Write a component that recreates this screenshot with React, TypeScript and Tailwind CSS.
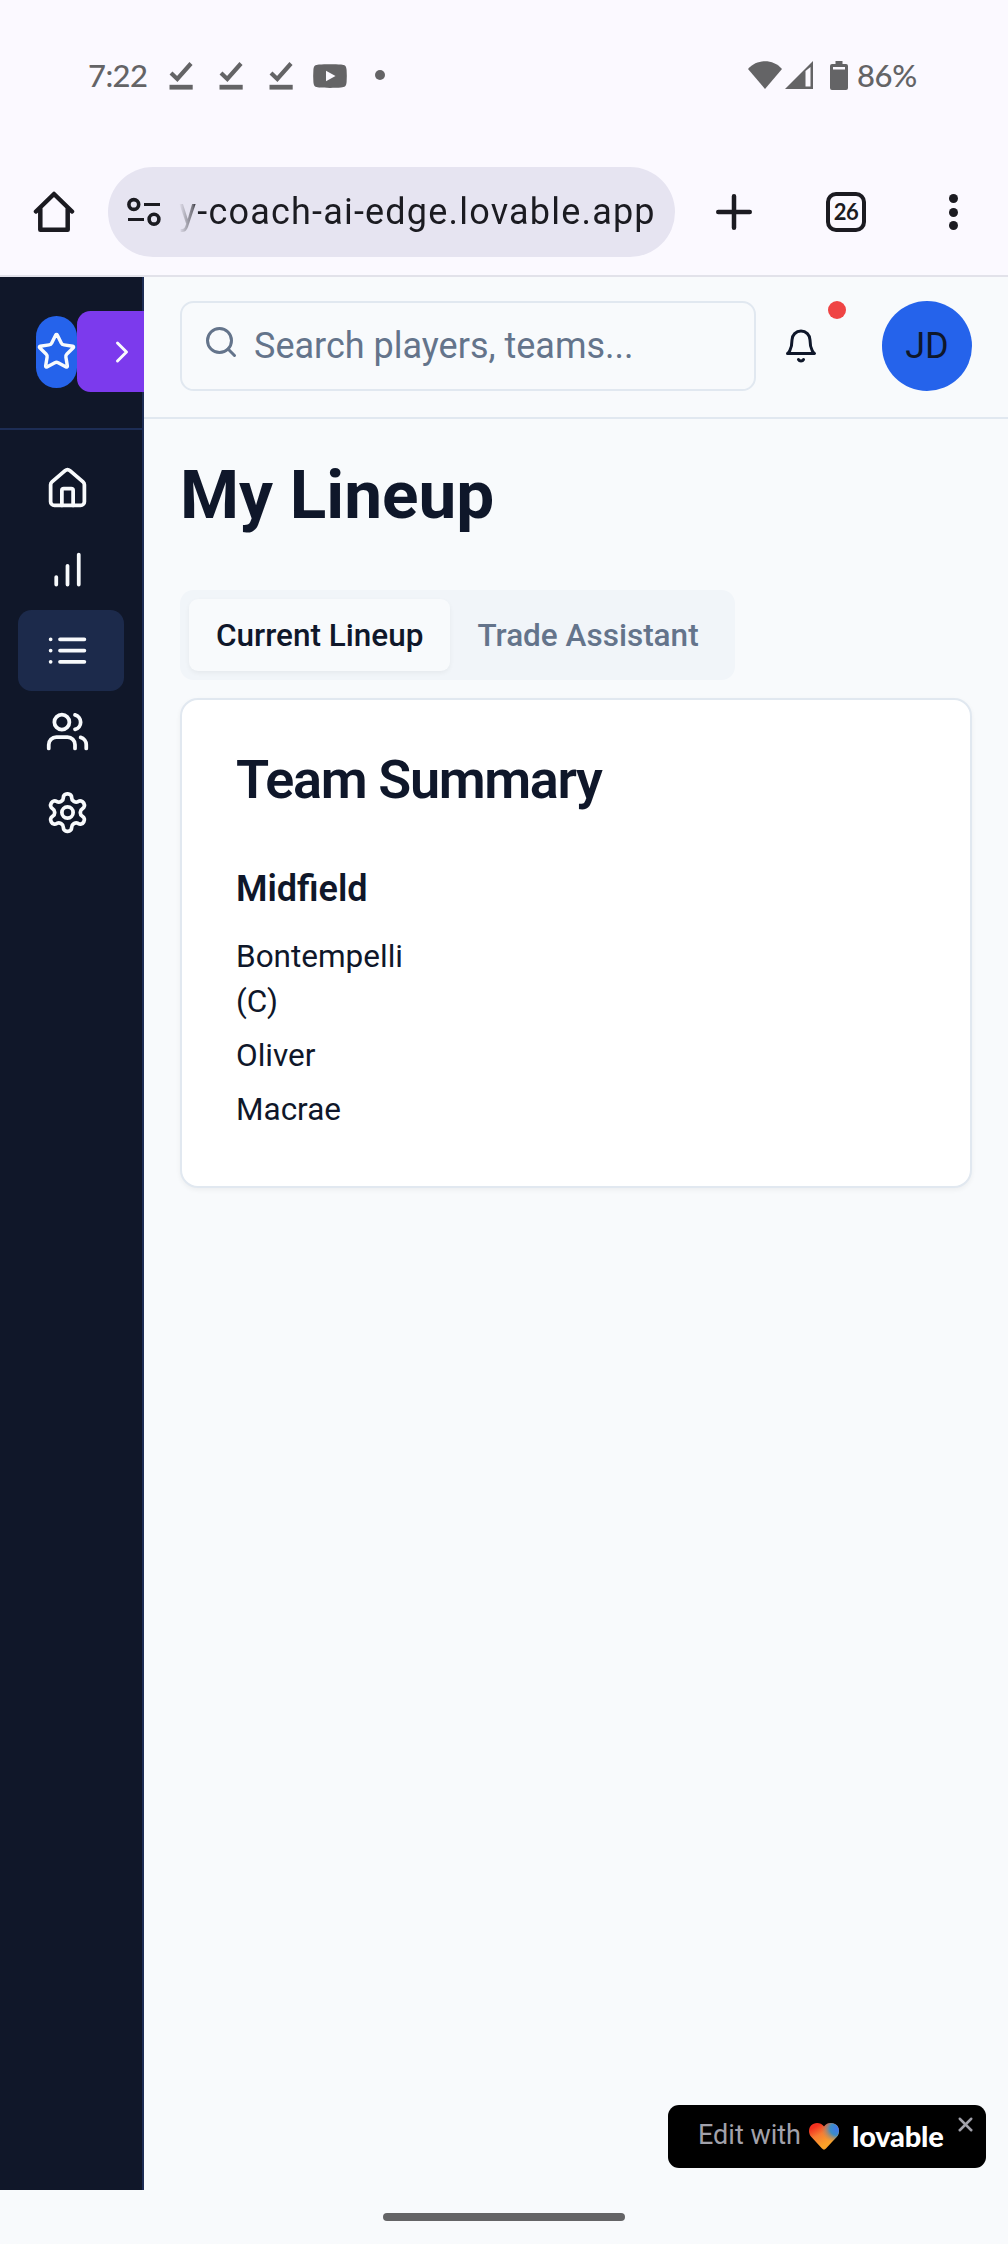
import React from "react";
import { House, Star, ChevronRight, X } from "lucide-react";

type IconProps = { className?: string; children: React.ReactNode };

function Stroke({ className = "", children }: IconProps) {
  return (
    <svg
      viewBox="0 0 24 24"
      fill="none"
      stroke="currentColor"
      strokeWidth="2"
      strokeLinecap="round"
      strokeLinejoin="round"
      className={className}
    >
      {children}
    </svg>
  );
}

function DoneIcon() {
  return (
    <svg viewBox="0 0 24 29" className="h-[29px] w-6" fill="none" stroke="#646466">
      <path d="M2 12 L8.3 18 L22 2.5" strokeWidth="4.2" />
      <path d="M0.5 26.2 H23.7" strokeWidth="4.8" />
    </svg>
  );
}

function StatusBar() {
  return (
    <div className="flex h-[150px] items-center px-[88px] font-['Lato'] text-[31px] font-medium text-[#646466]">
      <span className="w-[81px] tracking-[-0.6px]">7:22</span>
      <div className="flex items-center gap-[26px]">
        <DoneIcon />
        <DoneIcon />
        <DoneIcon />
      </div>
      <svg viewBox="0 0 34 24" className="ml-5 mt-0.5 h-6 w-[34px]">
        <path
          d="M6 .5C12 0 22 0 28 .5c4 .3 5.300 1.500 5.600 5.500.3 4 .3 8 0 12-.3 4-1.600 5.200-5.600 5.500-6 .5-16 .5-22 0C2 23.200.7 22 .4 18c-.3-4-.3-8 0-12C.7 2 2 .8 6 .5z"
          fill="#646466"
        />
        <path d="M13 6.800 22.500 12 13 17.200z" fill="#fbf9ff" />
      </svg>
      <div className="ml-7 size-[10px] rounded-full bg-[#646466]" />
      <div className="ml-auto flex items-center">
        <svg viewBox="0 0 34 28" className="h-7 w-[34px]" fill="#646466">
          <path d="M0 8C9-2.300 25-2.300 34 8L17 28z" />
        </svg>
        <svg viewBox="0 0 28 28" className="ml-[3px] h-7 w-7" fill="#646466">
          <path fillRule="evenodd" d="M28 0V28H0zM20.500 10V25.500H25.500V6z" />
        </svg>
        <svg viewBox="0 0 18 29" className="ml-[17px] h-[29px] w-[18px]" fill="#646466">
          <path
            fillRule="evenodd"
            d="M5.500 0H12.500V3H16Q18 3 18 5V27Q18 29 16 29H2Q0 29 0 27V5Q0 3 2 3H5.500zM3 6V8.500H15V6z"
          />
        </svg>
        <span className="ml-[9px] w-[63px] whitespace-nowrap tracking-[-0.4px]">86%</span>
      </div>
    </div>
  );
}

function BrowserBar() {
  return (
    <div className="flex h-[127px] items-start border-b-2 border-[#e2e2ea] pt-[17px] text-[#1b1b21]">
      <div className="flex h-[90px] w-[108px] items-center pl-[33px]">
        <svg viewBox="0 0 42 42" className="size-[42px]" fill="none" stroke="currentColor" strokeWidth="4.500" strokeLinecap="round" strokeLinejoin="round">
          <path d="M3 20.500 21 3 39 20.500" />
          <path d="M7.300 18V38.800H34.700V18" />
        </svg>
      </div>
      <div className="flex h-[90px] w-[567px] items-center overflow-hidden rounded-full bg-[#e6e4f1] pl-[18px]">
        <svg viewBox="0 0 36 30" className="h-[30px] w-9 shrink-0" fill="none" stroke="currentColor" strokeWidth="3.600">
          <circle cx="7.800" cy="7.500" r="4.900" />
          <path d="M18 7.500H34M2 22.500H18" strokeWidth="3.200" />
          <circle cx="28" cy="22.200" r="4.900" />
        </svg>
        <span className="ml-[17px] whitespace-nowrap bg-[linear-gradient(90deg,#1b1b2100_0,#1b1b2190_14px,#1b1b21_17px)] bg-clip-text font-['Roboto'] text-[36px] leading-[54px] tracking-[1.2px] text-transparent">
          y-coach-ai-edge.lovable.app
        </span>
      </div>
      <div className="flex h-[90px] flex-1 items-center">
        <svg viewBox="0 0 36 36" className="ml-[41px] size-9" stroke="currentColor" strokeWidth="4.500" strokeLinecap="round">
          <path d="M18 2.250V33.750M2.250 18H33.750" />
        </svg>
        <div className="ml-[74px] flex size-10 items-center justify-center rounded-[10px] border-[4px] border-current font-['Lato'] text-[22px] leading-none font-bold tracking-[-0.500px]">
          26
        </div>
        <div className="ml-[83px] flex flex-col gap-[4.500px]">
          <i className="size-[9px] rounded-full bg-current" />
          <i className="size-[9px] rounded-full bg-current" />
          <i className="size-[9px] rounded-full bg-current" />
        </div>
      </div>
    </div>
  );
}

function NavItem({ active = false, children }: { active?: boolean; children: React.ReactNode }) {
  return (
    <div
      className={
        "flex h-[81px] items-center rounded-[13.500px] pl-[27px] " + (active ? "bg-[#1c2a4b]" : "")
      }
    >
      {children}
    </div>
  );
}

function Sidebar() {
  return (
    <aside className="flex w-36 shrink-0 flex-col border-r-2 border-[#1d2d55] bg-[#101729] text-[#f8fafc]">
      <div className="flex h-[153px] items-center border-b-2 border-[#1d2d55] pb-px pl-9">
        <div className="flex h-[72px] w-[41px] shrink-0 items-center justify-center rounded-full bg-[#2563eb]">
          <Star className="-mt-0.5 size-[41px]" />
        </div>
        <div className="-mr-0.5 mb-px flex h-[81px] flex-1 items-center rounded-l-[13.500px] bg-[#7c3aed] pl-[27px]">
          <ChevronRight className="size-9" />
        </div>
      </div>
      <nav className="flex flex-col px-[18px] pt-[18px]">
        <NavItem>
          <House className="size-[45px]" />
        </NavItem>
        <NavItem>
          <Stroke className="size-[45px]">
            <path d="M12 20V10M18 20V4M6 20v-4" />
          </Stroke>
        </NavItem>
        <NavItem active>
          <Stroke className="size-[45px]">
            <path d="M8 6h13M8 12h13M8 18h13M3 6h.01M3 12h.01M3 18h.01" />
          </Stroke>
        </NavItem>
        <NavItem>
          <Stroke className="size-[45px]">
            <path d="M16 21v-2a4 4 0 0 0-4-4H6a4 4 0 0 0-4 4v2" />
            <circle cx="9" cy="7" r="4" />
            <path d="M22 21v-2a4 4 0 0 0-3-3.870M16 3.130a4 4 0 0 1 0 7.750" />
          </Stroke>
        </NavItem>
        <NavItem>
          <Stroke className="size-[45px]">
            <path d="M12.22 2h-.44a2 2 0 0 0-2 2v.18a2 2 0 0 1-1 1.73l-.43.25a2 2 0 0 1-2 0l-.15-.08a2 2 0 0 0-2.73.73l-.22.38a2 2 0 0 0 .73 2.73l.15.1a2 2 0 0 1 1 1.72v.51a2 2 0 0 1-1 1.74l-.15.09a2 2 0 0 0-.73 2.73l.22.38a2 2 0 0 0 2.73.73l.15-.08a2 2 0 0 1 2 0l.43.25a2 2 0 0 1 1 1.73V20a2 2 0 0 0 2 2h.44a2 2 0 0 0 2-2v-.18a2 2 0 0 1 1-1.73l.43-.25a2 2 0 0 1 2 0l.15.08a2 2 0 0 0 2.73-.73l.22-.39a2 2 0 0 0-.73-2.73l-.15-.08a2 2 0 0 1-1-1.74v-.5a2 2 0 0 1 1-1.74l.15-.09a2 2 0 0 0 .73-2.73l-.22-.38a2 2 0 0 0-2.73-.73l-.15.08a2 2 0 0 1-2 0l-.43-.25a2 2 0 0 1-1-1.73V4a2 2 0 0 0-2-2z" />
            <circle cx="12" cy="12" r="3" />
          </Stroke>
        </NavItem>
      </nav>
    </aside>
  );
}

function Header() {
  return (
    <header className="flex h-[142px] items-start border-b-2 border-[#e1e8f0] pt-6 pr-9 pl-9">
      <div className="flex h-[90px] w-[576px] items-center rounded-[13.500px] border-2 border-[#e1e8f0] pl-[21px] text-[#64748b]">
        <Stroke className="-mt-2 size-9">
          <circle cx="11" cy="11" r="8" />
          <path d="m21 21-4.300-4.300" />
        </Stroke>
        <span className="ml-[15px] text-[36px] leading-[54px]">Search players, teams...</span>
      </div>
      <div className="relative flex h-[90px] w-[90px] items-center pl-[27px] text-[#0f172a]">
        <Stroke className="size-9">
          <path d="M6 8a6 6 0 0 1 12 0c0 7 3 9 3 9H3s3-2 3-9" />
          <path d="M10.300 21a1.940 1.940 0 0 0 3.400 0" />
        </Stroke>
        <span className="absolute top-0 right-0 size-[18px] rounded-full bg-[#ef4444]" />
      </div>
      <div className="ml-auto flex size-[90px] items-center justify-center rounded-full bg-[#2563eb] text-[36px] leading-[54px] text-[#0f172a]">
        JD
      </div>
    </header>
  );
}

function Lineup() {
  const players = ["Bontempelli (C)", "Oliver", "Macrae"];
  return (
    <main className="px-9 pt-[35px] text-[#0f172a]">
      <h1 className="text-[67.500px] leading-[81px] font-bold">My Lineup</h1>
      <div className="mt-[55px] flex h-[90px] w-fit rounded-[13.500px] bg-[#f1f5f9] p-[9px] text-[31.500px] leading-[45px] font-medium">
        <div className="rounded-[9px] bg-[#f8fafc] px-[27px] py-[13.500px] shadow-[0_2px_5px_rgba(0,0,0,0.05)]">
          Current Lineup
        </div>
        <div className="px-[27px] py-[13.500px] text-[#64748b]">Trade Assistant</div>
      </div>
      <section className="mt-[18px] rounded-[18px] border-2 border-[#e1e8f0] bg-white p-[54px] pt-[53px] shadow-[0_2px_5px_rgba(0,0,0,0.05)]">
        <h2 className="text-[54px] leading-[54px] font-semibold tracking-[-1.350px]">Team Summary</h2>
        <div className="mt-[55px] grid grid-cols-3 gap-9">
          <div>
            <h3 className="text-[36px] leading-[54px] font-semibold">Midfield</h3>
            <ul className="mt-[18px] flex flex-col gap-[9px] text-[31.500px] leading-[45px]">
              {players.map((p) => (
                <li key={p}>{p}</li>
              ))}
            </ul>
          </div>
        </div>
      </section>
    </main>
  );
}

function LovableBadge() {
  return (
    <div className="absolute right-[22px] bottom-[22px] flex h-[63px] w-[318px] items-center rounded-[11px] bg-black pl-[30px]">
      <span className="mb-[3px] w-[111px] text-[27px] leading-[36px] whitespace-nowrap text-[#a1a1aa]">Edit with</span>
      <svg viewBox="0 0 30 27" className="h-[27px] w-[30px]">
        <defs>
          <linearGradient id="warm" x1="0.1" y1="0.1" x2="0.550" y2="0.8">
            <stop offset="0.1" stopColor="#f2311f" />
            <stop offset="0.500" stopColor="#f87c32" />
            <stop offset="1" stopColor="#fba229" />
          </linearGradient>
          <radialGradient id="cool" cx="0.950" cy="0.220" r="0.550">
            <stop offset="0" stopColor="#3d76ef" />
            <stop offset="0.450" stopColor="#3d8dc4" />
            <stop offset="1" stopColor="#c08a5c" stopOpacity="0" />
          </radialGradient>
        </defs>
        <path d="M15 3.500C11.800-1 5.200-.9 2 2.500-.8 5.800-.6 10.600 2.400 14L13 25.500Q15 27.800 17 25.500L27.600 14C30.600 10.600 30.800 5.800 28 2.500 24.800-.9 18.200-1 15 3.500z" fill="url(#warm)" />
        <path d="M15 3.500C11.800-1 5.200-.9 2 2.500-.8 5.800-.6 10.600 2.400 14L13 25.500Q15 27.800 17 25.500L27.600 14C30.600 10.600 30.800 5.800 28 2.500 24.800-.9 18.200-1 15 3.500z" fill="url(#cool)" />
      </svg>
      <span className="mb-px ml-[13px] font-['Lato'] text-[29px] leading-[36px] font-black tracking-[-0.2px] text-white">
        lovable
      </span>
      <X strokeWidth={2.6} className="absolute top-[8px] right-[9px] size-[23px] text-[#a1a1aa]" />
    </div>
  );
}

export default function App() {
  return (
    <div className="flex h-[2244px] w-[1008px] flex-col overflow-hidden bg-[#fbf9ff] font-['Roboto',sans-serif]">
      <StatusBar />
      <BrowserBar />
      <div className="relative flex h-[1913px] bg-[#f8fafc]">
        <Sidebar />
        <div className="flex-1">
          <Header />
          <Lineup />
        </div>
        <LovableBadge />
      </div>
      <div className="flex flex-1 items-center justify-center bg-[#f8fafc]">
        <div className="h-2 w-[242px] rounded-full bg-[#646466]" />
      </div>
    </div>
  );
}
